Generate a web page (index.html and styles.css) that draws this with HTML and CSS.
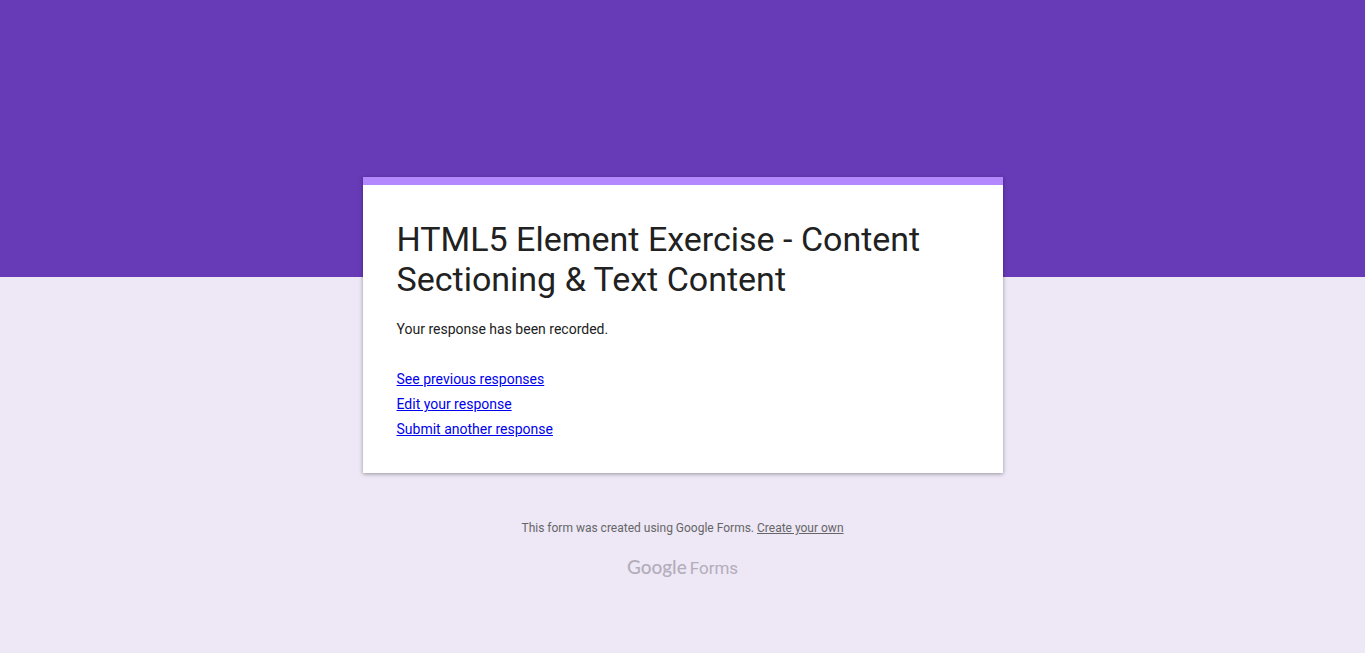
FILE: index.html
```html
<!DOCTYPE html>
<html lang="en">
<head>
<meta charset="utf-8">
<title>HTML5 Element Exercise - Content Sectioning &amp; Text Content</title>
<link rel="stylesheet" href="styles.css">
</head>
<body>
<main class="card">
  <h1 class="title">HTML5 Element Exercise - Content Sectioning &amp; Text Content</h1>
  <p class="message">Your response has been recorded.</p>
  <nav class="links">
    <a href="#previous">See previous responses</a>
    <a href="#edit">Edit your response</a>
    <a href="#another">Submit another response</a>
  </nav>
</main>
<footer class="footer">
  <p class="note">This form was created using Google Forms. <a href="#create">Create your own</a></p>
  <a class="brand" href="#forms"><span class="google">Google</span><span class="forms">Forms</span></a>
</footer>
</body>
</html>
```

FILE: styles.css
```css
* {
  box-sizing: border-box;
}

body {
  margin: 0;
  min-height: 100vh;
  padding: 177px 16px 72px;
  background: #ede7f6 linear-gradient(#673ab7, #673ab7) top / 100% 277px no-repeat;
  font-family: Roboto, "Liberation Sans", sans-serif;
  color: #212121;
}

.card {
  max-width: 640px;
  margin: 0 auto;
  padding: 34px 34px 31px;
  border-top: 8px solid #b388ff;
  background: #fff;
  box-shadow: 0 1px 4px rgba(0, 0, 0, 0.37);
}

.title {
  margin: 0;
  font-size: 34px;
  line-height: 40px;
  font-weight: 400;
}

.message {
  margin: 20px 0 28px;
  font-size: 14px;
  line-height: 20px;
}

.links {
  display: flex;
  flex-direction: column;
  align-items: flex-start;
  font-size: 14px;
  line-height: 25px;
}

.links a {
  color: #00e;
}

.footer {
  display: flex;
  flex-direction: column;
  align-items: center;
  gap: 19px;
  padding-top: 45px;
  color: #666;
}

.note {
  margin: 0;
  font-size: 12px;
  line-height: 20px;
}

.note a {
  color: inherit;
}

.brand {
  display: flex;
  align-items: baseline;
  gap: 3px;
  color: #b3adba;
  line-height: 20px;
  text-decoration: none;
}

.google {
  font-family: Lato, Roboto, sans-serif;
  font-size: 19px;
  font-weight: 500;
}

.forms {
  font-size: 17px;
}
```
